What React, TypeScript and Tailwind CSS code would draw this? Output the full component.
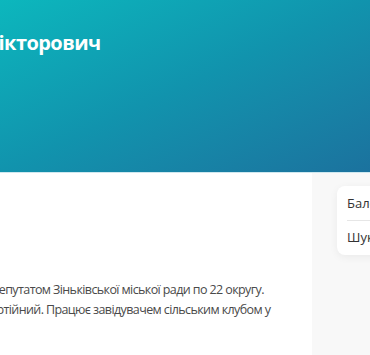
export default function App() {
  return (
    <div className="h-[355px] w-[370px] overflow-hidden bg-white font-['Open_Sans',sans-serif]">
      <header className="h-[173px] border-b border-[#cfe8ef] bg-gradient-to-br from-[#0cb7bd] via-[#1193ad] to-[#1b729e]">
        <h1 className="-ml-[67px] whitespace-nowrap pt-[29px] text-[20px] font-bold leading-[28px] tracking-[-0.55px] text-white">
          Олег Вікторович
        </h1>
      </header>

      <div className="flex">
        <main className="w-[312px] shrink-0 pt-[107px]">
          <p className="-ml-[36px] whitespace-nowrap text-[12.5px] leading-[20px] tracking-[-0.6px] text-[#4a4a4a]">
            Він є депутатом Зіньківської міської ради по 22 округу.
            <br />
            Безпартійний. Працює завідувачем сільським клубом у
          </p>
        </main>

        <aside className="h-[190px] flex-1 bg-[#f8f8f8] pl-[25px] pt-[13px]">
          <div className="w-[80px] rounded-l-lg bg-white pl-[10px] shadow-[0_2px_8px_rgba(0,0,0,0.06)]">
            <div className="whitespace-nowrap border-b border-[#e6e6e6] pb-[8px] pt-[9px] text-[13px] leading-[17px] text-[#333]">
              Балоха
            </div>
            <div className="whitespace-nowrap pb-[9px] pt-[8px] text-[13px] leading-[17px] text-[#333]">
              Шукач
            </div>
          </div>
        </aside>
      </div>
    </div>
  );
}
